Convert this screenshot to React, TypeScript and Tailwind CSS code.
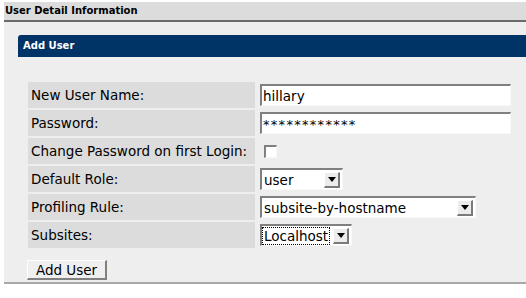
import React from "react";

const Arrow = () => (
  <span className="flex items-center justify-center w-[16px] h-[16px] bg-[#ececec] border-t border-l border-t-white border-l-white border-r-2 border-b-2 border-r-[#7a7a7a] border-b-[#7a7a7a] shrink-0">
    <svg width="8" height="5" viewBox="0 0 8 5"><path d="M0 0H8L4 5Z" fill="#000" /></svg>
  </span>
);

const Select = ({ value, width, focus }: { value: string; width: number; focus?: boolean }) => (
  <div
    className="flex items-center justify-between h-[22px] bg-white border-t-2 border-l-2 border-t-[#808080] border-l-[#808080] border-r border-b border-r-[#f8f8f8] border-b-[#f8f8f8] pl-[1px] pr-[2px]"
    style={{ width }}
  >
    <span className={"text-[13.5px] leading-[16px] px-[1px] " + (focus ? "outline-1 outline-dotted outline-black" : "")}>{value}</span>
    <Arrow />
  </div>
);

const Row = ({ label, children }: { label: string; children: React.ReactNode }) => (
  <>
    <div className="bg-[#dcdcdc] h-[26px] flex items-center pl-[3px] text-[13.5px]">{label}</div>
    <div className="h-[26px] flex items-center pl-[3px]">{children}</div>
  </>
);

export default function App() {
  return (
    <div className="w-[526px] h-[298px] bg-white text-black font-['DejaVu_Sans',Verdana,sans-serif] overflow-hidden">
      <div className="pt-[2px] pl-[4px]">
        <div className="h-[20px] bg-[#dcdcdc] border-b-2 border-[#6a6a6a] text-[10px] font-bold leading-[18px] pl-[1px]">
          User Detail Information
        </div>
        <div className="bg-[#eeeeee] border-b-2 border-[#a8a8a8] pl-[14px] pt-[13px] h-[262px]">
          <div className="h-[22px] bg-[#003366] rounded-tl-[3px] text-white text-[10px] font-bold leading-[22px] pl-[5px]">
            Add User
          </div>
          <div className="ml-[10px] mt-[25px] grid grid-cols-[227px_auto] gap-x-[2px] gap-y-[2px]">
            <Row label="New User Name:">
              <input
                readOnly
                value="hillary"
                className="w-[251px] h-[22px] bg-white border-t-2 border-l-2 border-t-[#808080] border-l-[#808080] border-r border-b border-r-[#f8f8f8] border-b-[#f8f8f8] text-[13.5px] px-[1px] outline-none"
              />
            </Row>
            <Row label="Password:">
              <div className="w-[251px] h-[22px] bg-white border-t-2 border-l-2 border-t-[#808080] border-l-[#808080] border-r border-b border-r-[#f8f8f8] border-b-[#f8f8f8] text-[13px] leading-[22px] tracking-[1.3px] px-[1px]">
                ************
              </div>
            </Row>
            <Row label="Change Password on first Login:">
              <div className="ml-[4px] w-[13px] h-[13px] bg-white border-t-2 border-l-2 border-t-[#808080] border-l-[#808080] border-r border-b border-r-[#f8f8f8] border-b-[#f8f8f8]" />
            </Row>
            <Row label="Default Role:">
              <Select value="user" width={83} />
            </Row>
            <Row label="Profiling Rule:">
              <Select value="subsite-by-hostname" width={216} />
            </Row>
            <Row label="Subsites:">
              <Select value="Localhost" width={92} focus />
            </Row>
          </div>
          <button className="mt-[12px] ml-[9px] w-[80px] h-[20px] bg-[#efefef] border-t border-l border-t-white border-l-white border-r-2 border-b-2 border-r-[#808080] border-b-[#808080] text-[13.5px] leading-[16px]">
            Add User
          </button>
        </div>
      </div>
    </div>
  );
}
